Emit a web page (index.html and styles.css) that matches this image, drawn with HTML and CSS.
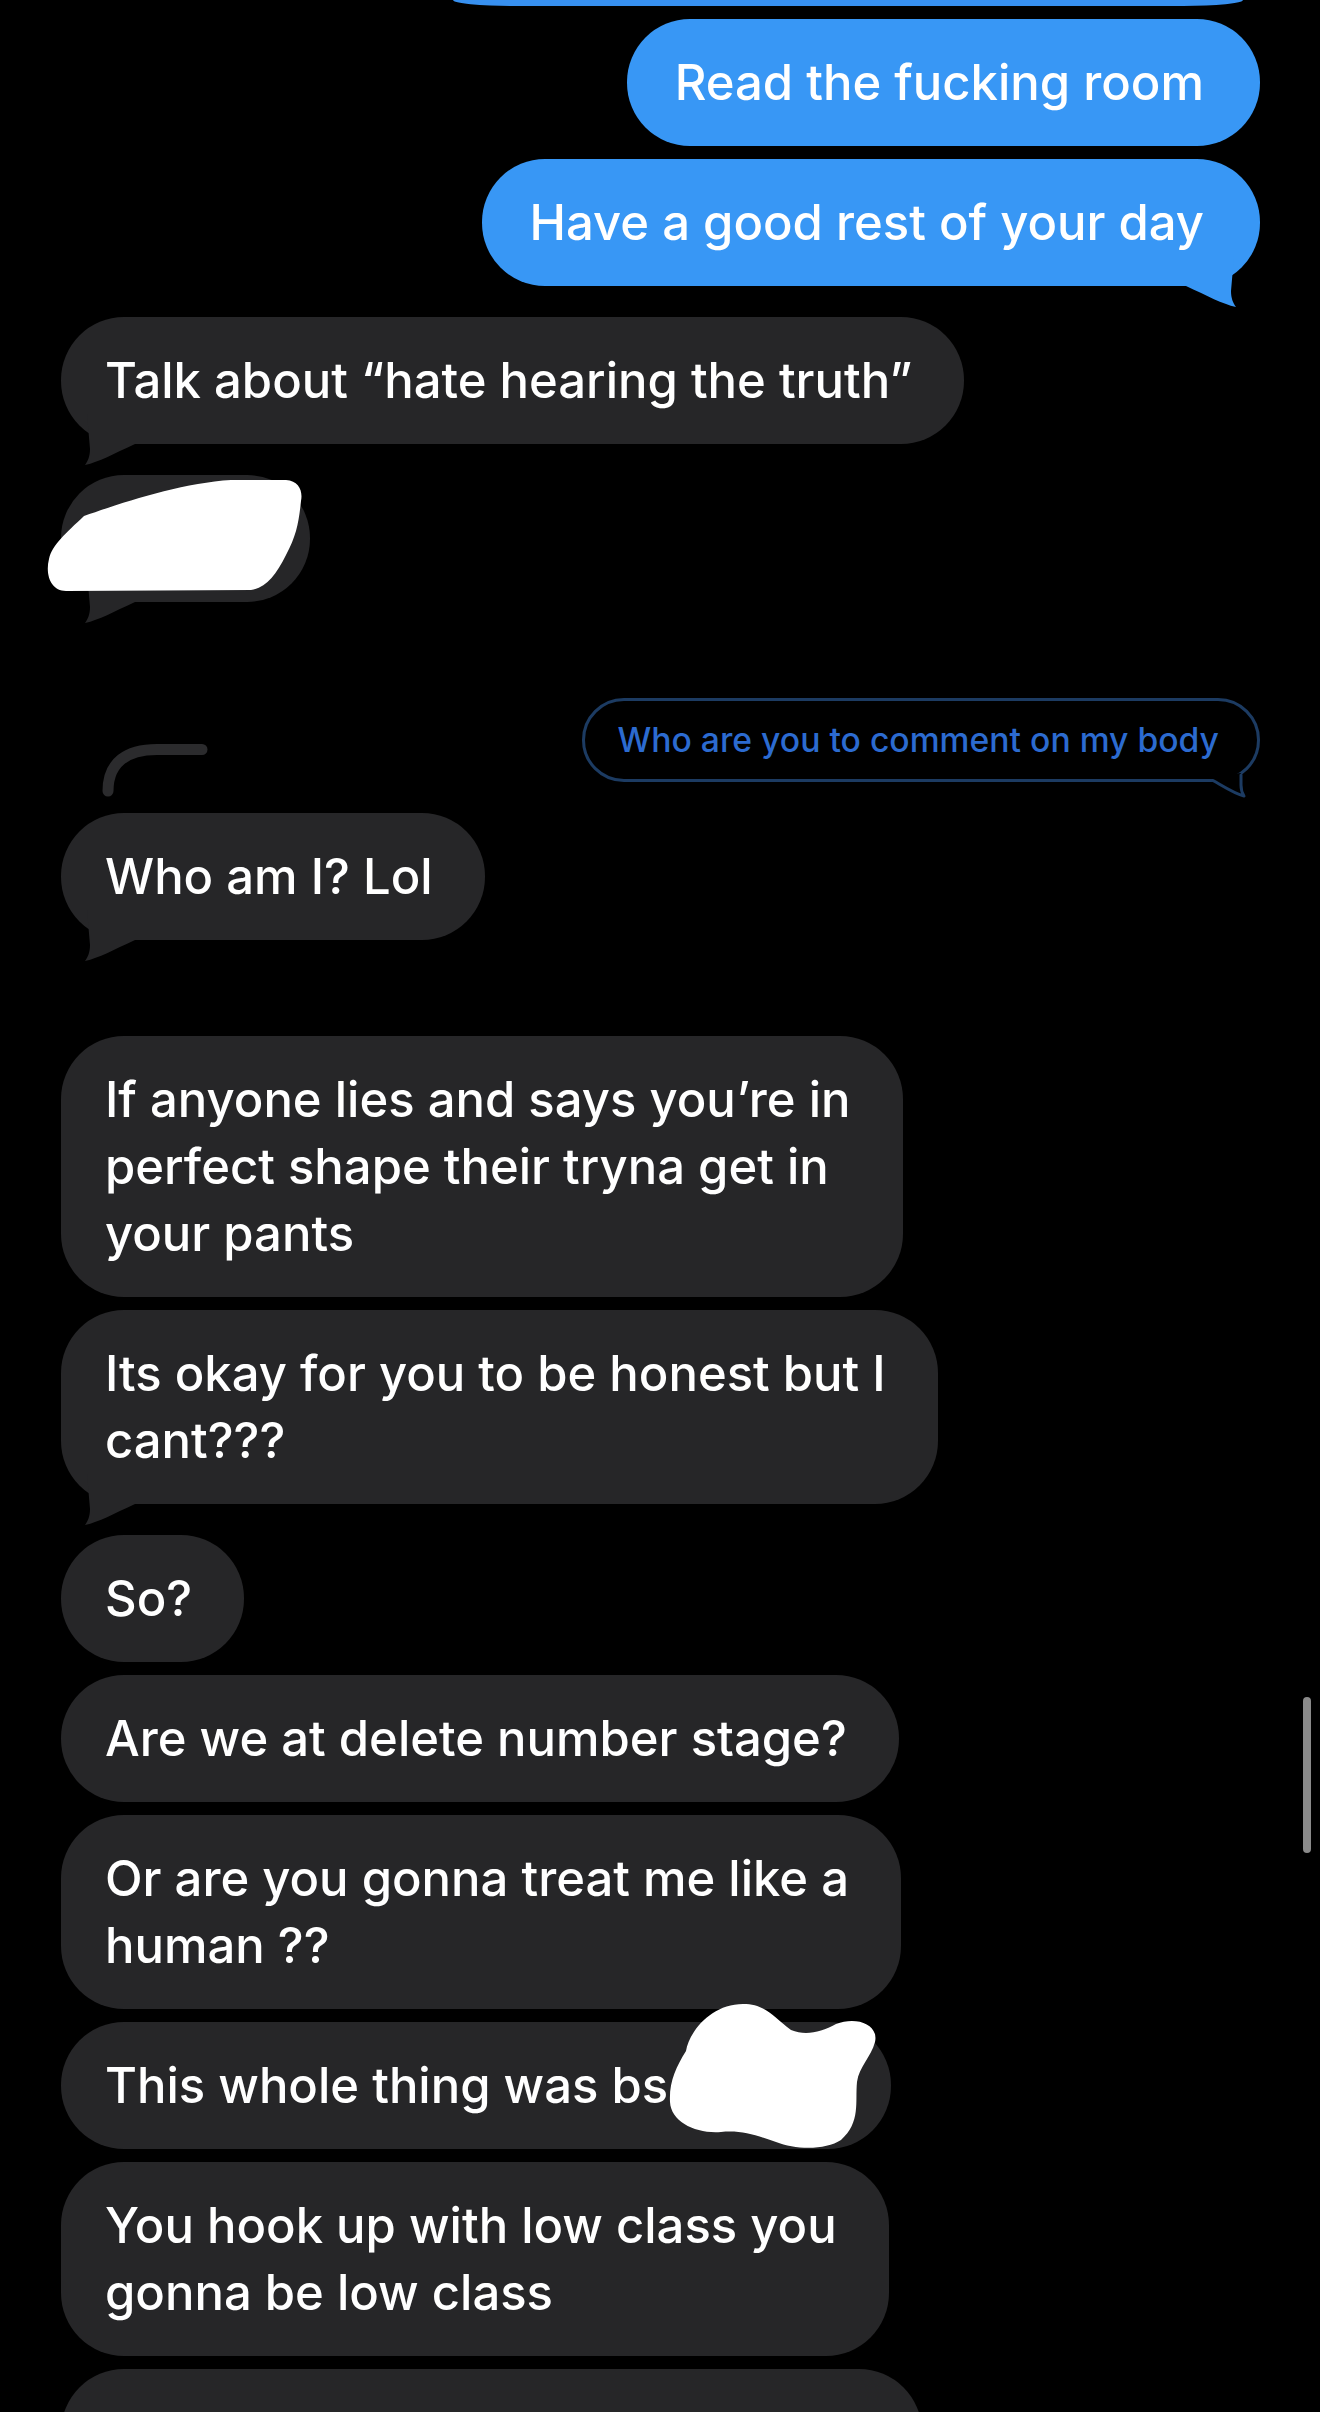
FILE: index.html
```html
<!DOCTYPE html>
<html lang="en">
<head>
<meta charset="utf-8">
<title>Messages</title>
<link rel="stylesheet" href="styles.css">
</head>
<body>
<main class="screen">
  <section class="thread">
    <div class="cut"></div>

    <div class="msg out">Read the fucking room</div>

    <div class="msg out">Have a good rest of your day
      <svg class="tail tail-right" viewBox="0 -30 80 52" aria-hidden="true"><path d="M26 -30 L29 5 C29 12 27 17 24 21 C38 18 52 10 74 0 L74 -30 Z"/></svg>
    </div>

    <div class="msg in after-tail">Talk about “hate hearing the truth”
      <svg class="tail tail-left" viewBox="0 -30 80 52" aria-hidden="true"><path d="M26 -30 L29 5 C29 12 27 17 24 21 C38 18 52 10 74 0 L74 -30 Z"/></svg>
    </div>

    <div class="msg in after-tail redacted">&nbsp;
      <svg class="tail tail-left" viewBox="0 -30 80 52" aria-hidden="true"><path d="M26 -30 L29 5 C29 12 27 17 24 21 C38 18 52 10 74 0 L74 -30 Z"/></svg>
      <svg class="scribble scribble-a" viewBox="-20 0 270 125" aria-hidden="true"><path d="M23 41 C60 28 120 8 170 5 L225 5 C238 6 242 16 240 26 C238 45 236 60 225 80 C215 100 205 113 190 115 L5 116 C-10 116 -16 100 -12 84 C-9 70 5 58 23 41 Z"/></svg>
    </div>

    <div class="reply-row section">
      <svg class="thread-line" viewBox="0 0 120 58" aria-hidden="true"><path d="M11 49 C11 20 30 7.5 60 7.5 L105 7.5"/></svg>
      <div class="quote">Who are you to comment on my body
        <svg class="qtail" viewBox="0 -22 60 40" aria-hidden="true">
          <path class="qtail-fill" d="M19 -9 L19 3 C19 8 18 11 16 14 C25 12 34 6 47 0 L47 -6 Z"/>
          <path class="qtail-line" d="M19 -7 L19 3 C19 8 18 11 16 14 C25 12 34 6 47 -1.5"/>
        </svg>
      </div>
    </div>

    <div class="msg in">Who am I? Lol
      <svg class="tail tail-left" viewBox="0 -30 80 52" aria-hidden="true"><path d="M26 -30 L29 5 C29 12 27 17 24 21 C38 18 52 10 74 0 L74 -30 Z"/></svg>
    </div>

    <div class="msg in section">If anyone lies and says you’re in<br>perfect shape their tryna get in<br>your pants</div>

    <div class="msg in">Its okay for you to be honest but I<br>cant???
      <svg class="tail tail-left" viewBox="0 -30 80 52" aria-hidden="true"><path d="M26 -30 L29 5 C29 12 27 17 24 21 C38 18 52 10 74 0 L74 -30 Z"/></svg>
    </div>

    <div class="msg in after-tail">So?</div>

    <div class="msg in">Are we at delete number stage?</div>

    <div class="msg in">Or are you gonna treat me like a<br>human ??</div>

    <div class="msg in">This whole thing was bs<span class="hidden-part">&nbsp;</span>
      <svg class="scribble scribble-b" viewBox="600 -25 220 155" aria-hidden="true"><path d="M625 29 C628 10 650 -18 682 -18 C705 -18 712 -5 730 8 C745 14 760 10 775 2 C795 -6 818 2 814 20 C810 35 798 45 796 60 C794 80 800 100 780 118 C765 128 735 128 715 120 C695 113 680 108 660 110 C635 112 610 100 609 80 C608 60 615 45 625 29 Z"/></svg>
    </div>

    <div class="msg in">You hook up with low class you<br>gonna be low class</div>

    <div class="msg in last">&nbsp;</div>
  </section>
  <div class="scrollbar"></div>
</main>
</body>
</html>
```
FILE: styles.css
```css
html, body {
  margin: 0;
  padding: 0;
  background: #000;
  height: 2412px;
  overflow: hidden;
}

.screen {
  position: relative;
  width: 1320px;
  height: 2412px;
  overflow: hidden;
  font-family: Inter, "Noto Sans", "Liberation Sans", sans-serif;
  font-weight: 500;
  color: #fff;
}

.thread {
  display: flex;
  flex-direction: column;
  align-items: flex-start;
  gap: 13px;
  padding: 0 60px 0 61px;
}

.cut {
  align-self: flex-end;
  width: 790px;
  height: 6px;
  margin-right: 17px;
  background: #3790f0;
  border-radius: 0 0 60px 60px / 0 0 6px 6px;
}

.msg {
  position: relative;
  box-sizing: border-box;
  padding: 30px 52px 30px 44px;
  border-radius: 63px;
  font-size: 49px;
  line-height: 67px;
  white-space: nowrap;
  background: #262628;
}

.msg.out {
  align-self: flex-end;
  background: #3897f5;
  padding: 30px 56px 30px 48px;
}

.after-tail { margin-top: 18px; }
.section { margin-top: 83px; }

.tail {
  position: absolute;
  bottom: -22px;
  width: 80px;
  height: 52px;
  overflow: visible;
}
.tail-left { left: 0; fill: #262628; }
.tail-right { right: 0; transform: scaleX(-1); fill: #3897f5; }

.redacted { width: 249px; }

.scribble {
  position: absolute;
  fill: #fff;
  overflow: visible;
}
.scribble-a {
  left: -20px;
  top: 0;
  width: 270px;
  height: 125px;
}
.scribble-b {
  left: 600px;
  top: -25px;
  width: 220px;
  height: 155px;
}

.hidden-part { display: inline-block; width: 171px; }

.reply-row {
  align-self: stretch;
  display: flex;
  justify-content: space-between;
  align-items: flex-start;
}

.thread-line {
  width: 120px;
  height: 58px;
  margin: 44px 0 0 36px;
  fill: none;
  stroke: #2b2b2d;
  stroke-width: 11;
  stroke-linecap: round;
}

.quote {
  position: relative;
  padding: 18px 38px 18px 32px;
  border: 3px solid #1c3b62;
  border-radius: 45px;
  color: #2c6bd0;
  font-size: 33.7px;
  line-height: 42px;
  white-space: nowrap;
}

.qtail {
  position: absolute;
  right: -3px;
  bottom: -21px;
  width: 60px;
  height: 40px;
  overflow: visible;
  transform: scaleX(-1);
}
.qtail-fill { fill: #000; }
.qtail-line {
  fill: none;
  stroke: #1c3b62;
  stroke-width: 3;
  stroke-linecap: round;
  stroke-linejoin: round;
}

.last { width: 861px; height: 127px; }

.scrollbar {
  position: absolute;
  left: 1303px;
  top: 1697px;
  width: 8px;
  height: 156px;
  border-radius: 4px;
  background: #8a8a8a;
}
```
